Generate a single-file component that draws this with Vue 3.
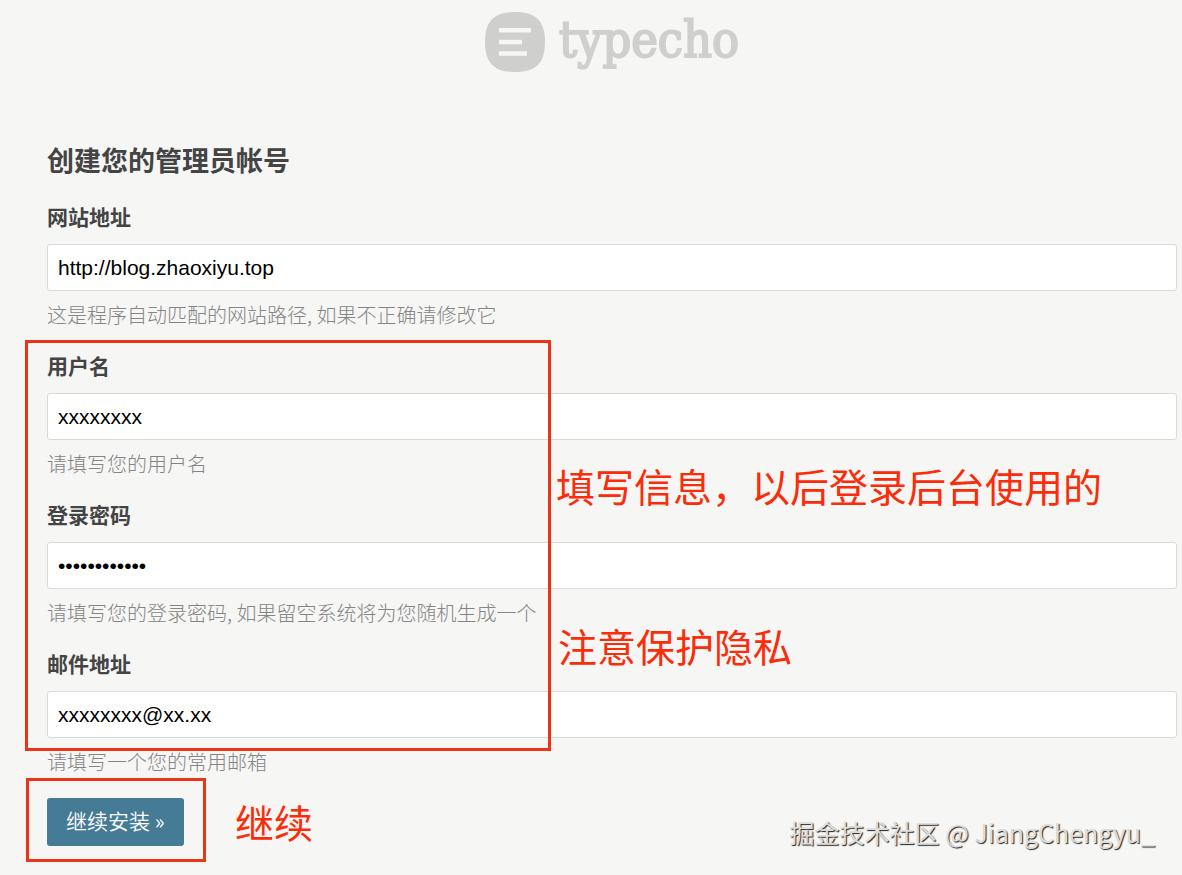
<script setup>
import { reactive } from 'vue'

const fields = reactive([
  { id: 'url', label: '网站地址', type: 'text', value: 'http://blog.zhaoxiyu.top', hint: '这是程序自动匹配的网站路径, 如果不正确请修改它' },
  { id: 'name', label: '用户名', type: 'text', value: 'xxxxxxxx', hint: '请填写您的用户名' },
  { id: 'password', label: '登录密码', type: 'password', value: 'xxxxxxxxxxxx', hint: '请填写您的登录密码, 如果留空系统将为您随机生成一个' },
  { id: 'mail', label: '邮件地址', type: 'text', value: 'xxxxxxxx@xx.xx', hint: '请填写一个您的常用邮箱' }
])
</script>

<template>
  <div class="page">
    <header class="brand">
      <svg class="mark" viewBox="0 0 60 60" aria-hidden="true">
        <path d="M30 0C51 0 60 9 60 30S51 60 30 60 0 51 0 30 9 0 30 0Z" fill="#cfcfcd" />
        <path d="M14 18.3H46M14 30H37M14 41.5H42" stroke="#f6f6f4" stroke-width="4.6" />
      </svg>
      <span class="wordmark">typecho</span>
    </header>

    <main>
      <h1>创建您的管理员帐号</h1>
      <form @submit.prevent>
        <div v-for="f in fields" :key="f.id" class="field">
          <label :for="f.id">{{ f.label }}</label>
          <input :id="f.id" v-model="f.value" :type="f.type" :aria-describedby="f.id + '-hint'" autocomplete="off" />
          <p :id="f.id + '-hint'">{{ f.hint }}</p>
        </div>
        <button type="submit">继续安装 »</button>
      </form>
    </main>

    <div class="frame frame-fields"></div>
    <div class="frame frame-submit"></div>
    <p class="note note-info">填写信息，以后登录后台使用的</p>
    <p class="note note-privacy">注意保护隐私</p>
    <p class="note note-next">继续</p>
    <p class="watermark">掘金技术社区 @ JiangChengyu_</p>
  </div>
</template>

<style>
body {
  margin: 0;
  background: #f6f6f4;
}
</style>

<style scoped>
.page {
  position: relative;
  min-height: 100vh;
  box-sizing: border-box;
  padding: 12px 5px 28px 47px;
  overflow: hidden;
  color: #444;
  font-family: "Noto Sans CJK SC", sans-serif;
}
.brand {
  display: flex;
  justify-content: center;
  gap: 14px;
  height: 60px;
}
.mark {
  width: 60px;
  height: 60px;
}
.wordmark {
  color: #cfcfcd;
  font: 50px/56px "DejaVu Serif Condensed", "DejaVu Serif", serif;
  font-stretch: condensed;
  -webkit-text-stroke: 2px #cfcfcd;
}
h1 {
  margin: 68px 0 22px;
  font-size: 27px;
  line-height: 40px;
  font-weight: 700;
}
.field {
  display: flex;
  flex-direction: column;
  margin-bottom: 22px;
}
label {
  margin-bottom: 14px;
  font-size: 21px;
  line-height: 28px;
  font-weight: 700;
}
input {
  box-sizing: border-box;
  width: 100%;
  height: 47px;
  padding: 0 10px;
  border: 1px solid #d9d9d6;
  border-radius: 3px;
  outline: none;
  background: #fff;
  color: #000;
  font: 21px "Liberation Sans", Arial, sans-serif;
}
.field p {
  margin: 10px 0 0;
  color: #858585;
  font-size: 20px;
  line-height: 28px;
  font-weight: 300;
}
button {
  display: block;
  height: 48px;
  padding: 0 19px 4px;
  border: 0;
  border-radius: 3px;
  background: #467b96;
  color: #fff;
  font: 350 21px "Noto Sans CJK SC", sans-serif;
}
.frame {
  position: absolute;
  box-sizing: border-box;
  border: 3px solid #ea3415;
  pointer-events: none;
}
.frame-fields {
  left: 25px;
  top: 340px;
  width: 526px;
  height: 411px;
}
.frame-submit {
  left: 26px;
  top: 778px;
  width: 180px;
  height: 84px;
}
.note {
  position: absolute;
  margin: 0;
  color: #fa2c0a;
  font-size: 39px;
  line-height: 56px;
  font-weight: 400;
  white-space: nowrap;
}
.note-info {
  left: 556px;
  top: 457px;
}
.note-privacy {
  left: 558px;
  top: 617px;
}
.note-next {
  left: 235px;
  top: 793px;
}
.watermark {
  position: absolute;
  right: 27px;
  bottom: 25px;
  margin: 0;
  color: #ddd;
  font-size: 25px;
  line-height: 36px;
  text-shadow: 1px 1px 1px #222;
  white-space: nowrap;
}
</style>
